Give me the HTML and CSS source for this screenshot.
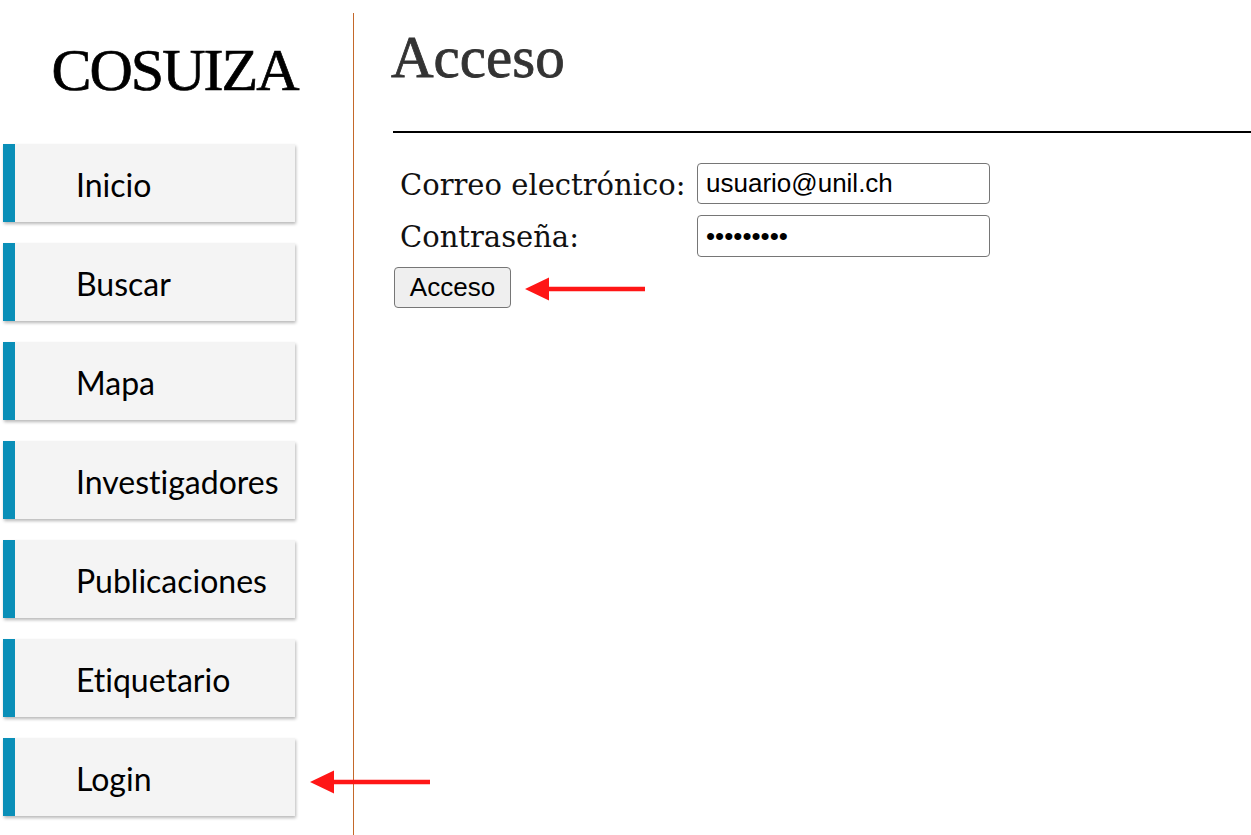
FILE: index.html
```html
<!DOCTYPE html>
<html lang="es">
<head>
<meta charset="utf-8">
<title>COSUIZA - Acceso</title>
<link rel="stylesheet" href="styles.css">
</head>
<body>
<div class="page">
  <aside class="sidebar">
    <div class="logo">COSUIZA</div>
    <nav class="nav">
      <a class="nav-item" href="#">Inicio</a>
      <a class="nav-item" href="#">Buscar</a>
      <a class="nav-item" href="#">Mapa</a>
      <a class="nav-item" href="#">Investigadores</a>
      <a class="nav-item" href="#">Publicaciones</a>
      <a class="nav-item" href="#">Etiquetario</a>
      <a class="nav-item" href="#">Login</a>
    </nav>
  </aside>
  <main class="main">
    <h1 class="title">Acceso</h1>
    <hr class="rule">
    <form class="login-form">
      <div class="fields">
        <label class="label" for="email">Correo electrónico:</label>
        <input class="input" id="email" type="text" value="usuario@unil.ch">
        <label class="label" for="pass">Contraseña:</label>
        <input class="input" id="pass" type="password" value="123456789">
      </div>
      <button class="submit" type="button">Acceso</button>
    </form>
  </main>
</div>
<svg class="arrow arrow-button" width="122" height="26" viewBox="0 0 122 26"><polygon points="0,13 24,1.5 24,10.8 120,10.8 120,15.2 24,15.2 24,24.5" fill="#ff1616"/></svg>
<svg class="arrow arrow-login" width="122" height="26" viewBox="0 0 122 26"><polygon points="0,13 24,1.5 24,10.8 120,10.8 120,15.2 24,15.2 24,24.5" fill="#ff1616"/></svg>
</body>
</html>
```
FILE: styles.css
```css
html, body {
  margin: 0;
  padding: 0;
  background: #ffffff;
}

body {
  position: relative;
  width: 1251px;
  height: 835px;
  overflow: hidden;
}

.page {
  display: flex;
  margin-top: 13px;
  height: 822px;
}

.sidebar {
  width: 354px;
  box-sizing: border-box;
  border-right: 1px solid #c4682a;
  padding-top: 27px;
  flex-shrink: 0;
}

.logo {
  font-family: "Liberation Serif", "Times New Roman", serif;
  font-size: 60px;
  line-height: 60px;
  letter-spacing: -2px;
  color: #000;
  text-align: center;
  padding-right: 4px;
  -webkit-text-stroke: 0.7px #000;
}

.nav {
  display: flex;
  flex-direction: column;
  gap: 21px;
  margin-top: 44px;
  margin-left: 3px;
}

.nav-item {
  display: flex;
  align-items: center;
  width: 292px;
  height: 78px;
  box-sizing: border-box;
  border-left: 12px solid #0a8fb8;
  background: #f4f4f4;
  box-shadow: 1px 2px 3px rgba(0, 0, 0, 0.28);
  padding-left: 61px;
  padding-top: 2px;
  font-family: Lato, "Noto Sans", sans-serif;
  font-size: 32px;
  font-variant-ligatures: none;
  color: #000;
  text-decoration: none;
}

.main {
  flex: 1;
  padding-left: 39px;
}

.title {
  margin: 15px 0 0 -2px;
  font-family: "Liberation Serif", "Times New Roman", serif;
  font-size: 59px;
  line-height: 59px;
  font-weight: normal;
  color: #333;
  -webkit-text-stroke: 0.8px #333;
}

.rule {
  margin: 44px 0 0 0;
  border: 0;
  height: 2px;
  background: #000;
}

.login-form {
  margin-top: 30px;
  margin-left: 1px;
}

.fields {
  display: grid;
  grid-template-columns: 303px 293px;
  row-gap: 11px;
  align-items: center;
}

.label {
  padding-left: 6px;
  font-family: "DejaVu Serif", serif;
  font-size: 29px;
  color: #111;
  padding-top: 2px;
}

.input {
  width: 293px;
  height: 41px;
  box-sizing: border-box;
  border: 1px solid #767676;
  border-radius: 4px;
  padding: 0 8px;
  font-family: "Liberation Sans", Arial, sans-serif;
  font-size: 26px;
  color: #000;
  background: #fff;
}

#pass {
  height: 42px;
}

.submit {
  margin-top: 10px;
  width: 117px;
  height: 41px;
  box-sizing: border-box;
  border: 1px solid #767676;
  border-radius: 4px;
  background: #efefef;
  padding: 0;
  font-family: "Liberation Sans", Arial, sans-serif;
  font-size: 26px;
  color: #000;
}

.arrow {
  position: absolute;
}

.arrow-button {
  left: 525px;
  top: 276px;
}

.arrow-login {
  left: 310px;
  top: 769px;
}
```
